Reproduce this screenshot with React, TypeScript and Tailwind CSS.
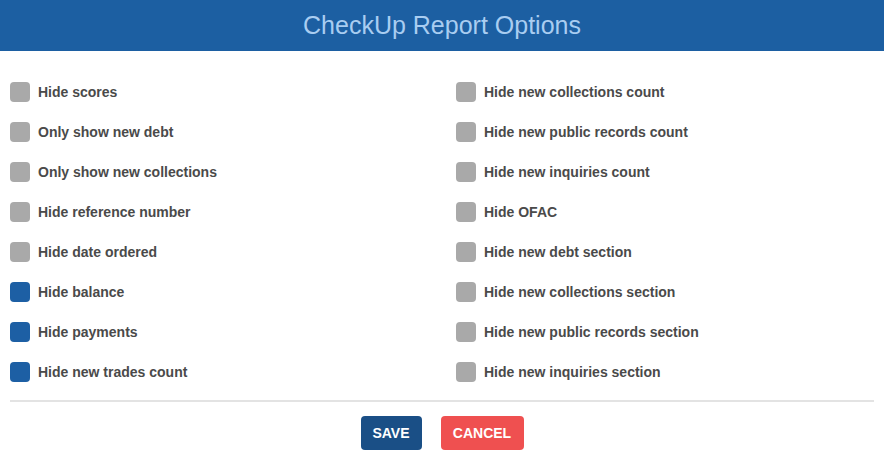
const leftOptions = [
  { label: "Hide scores", checked: false },
  { label: "Only show new debt", checked: false },
  { label: "Only show new collections", checked: false },
  { label: "Hide reference number", checked: false },
  { label: "Hide date ordered", checked: false },
  { label: "Hide balance", checked: true },
  { label: "Hide payments", checked: true },
  { label: "Hide new trades count", checked: true },
];

const rightOptions = [
  { label: "Hide new collections count", checked: false },
  { label: "Hide new public records count", checked: false },
  { label: "Hide new inquiries count", checked: false },
  { label: "Hide OFAC", checked: false },
  { label: "Hide new debt section", checked: false },
  { label: "Hide new collections section", checked: false },
  { label: "Hide new public records section", checked: false },
  { label: "Hide new inquiries section", checked: false },
];

function Option({ label, checked }: { label: string; checked: boolean }) {
  return (
    <label className="flex h-10 items-center gap-2 cursor-pointer">
      <span
        className={`h-5 w-5 shrink-0 rounded ${
          checked ? "bg-[#1d5fa4]" : "bg-[#a9a9a9]"
        }`}
      />
      <span className="text-[14px] font-bold text-[#4a4a4a]">{label}</span>
    </label>
  );
}

export default function App() {
  return (
    <div className="w-[884px] h-[467px] bg-white font-['Liberation_Sans',Arial,sans-serif]">
      <div className="flex h-[51px] items-center justify-center bg-[#1c5fa2]">
        <h1 className="text-[25px] text-[#a9cdf1]">CheckUp Report Options</h1>
      </div>
      <div className="grid grid-cols-[446px_1fr] px-[10px] pt-[21px]">
        <div className="flex flex-col">
          {leftOptions.map((o) => (
            <Option key={o.label} {...o} />
          ))}
        </div>
        <div className="flex flex-col">
          {rightOptions.map((o) => (
            <Option key={o.label} {...o} />
          ))}
        </div>
      </div>
      <div className="mx-[10px] mt-[8px] h-[2px] bg-[#e3e3e3]" />
      <div className="flex justify-center gap-[19px] pt-[14px]">
        <button
          type="button"
          className="h-[34px] w-[61px] rounded-[4px] bg-[#1a4f86] text-[14px] font-bold text-white"
        >
          SAVE
        </button>
        <button
          type="button"
          className="h-[34px] w-[83px] rounded-[4px] bg-[#ef5050] text-[14px] font-bold text-white"
        >
          CANCEL
        </button>
      </div>
    </div>
  );
}
